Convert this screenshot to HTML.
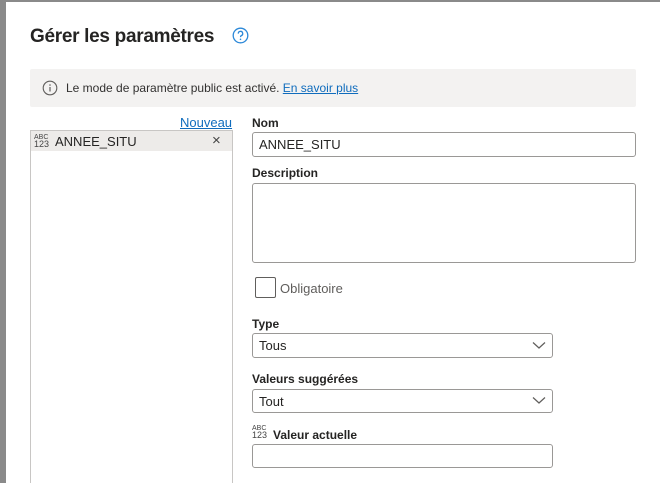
<!DOCTYPE html>
<html><head><meta charset="utf-8"><style>
*{box-sizing:border-box;margin:0;padding:0}
html,body{width:660px;height:483px;overflow:hidden}
body{background:#8a8a8a;font-family:"Liberation Sans",sans-serif;color:#252423;position:relative}
.dlg{position:absolute;left:6px;top:2px;right:0;bottom:0;background:#fff}
.a{position:absolute}
.lbl{font-size:12px;font-weight:bold;color:#252423}
.inp{border:1px solid #9a9896;border-radius:3px;background:#fff;font-size:13px;padding:0 6px;display:flex;align-items:center}
.abc{font-size:7px;line-height:7px;color:#444;letter-spacing:0}
</style></head><body>
<div class="dlg"></div>
<div class="a" style="left:30px;top:26px;font-size:19px;font-weight:bold;color:#252423;letter-spacing:-0.3px">Gérer les paramètres</div>
<svg class="a" style="left:232px;top:27px" width="17" height="17" viewBox="0 0 17 17"><circle cx="8.5" cy="8.5" r="7.3" fill="none" stroke="#2b88d8" stroke-width="1.3"/><path d="M6.3 6.6a2.2 2.2 0 1 1 3 2c-.7.3-.8.8-.8 1.5" fill="none" stroke="#2b88d8" stroke-width="1.3"/><circle cx="8.5" cy="12.3" r=".8" fill="#2b88d8"/></svg>
<div class="a" style="left:30px;top:69px;width:606px;height:38px;background:#f3f2f1;border-radius:2px"></div>
<svg class="a" style="left:42px;top:80px" width="16" height="16" viewBox="0 0 16 16"><circle cx="8" cy="8" r="6.8" fill="none" stroke="#605e5c" stroke-width="1.1"/><path d="M8 7v4.5" stroke="#605e5c" stroke-width="1.2"/><circle cx="8" cy="5" r=".8" fill="#605e5c"/></svg>
<div class="a" style="left:66px;top:81px;font-size:12px;color:#323130">Le mode de paramètre public est activé. <span style="color:#0f6cbd;text-decoration:underline">En savoir plus</span></div>
<div class="a" style="left:180px;top:115px;font-size:13px;color:#0f6cbd;text-decoration:underline">Nouveau</div>
<div class="a" style="left:30px;top:130px;width:203px;height:353px;border:1px solid #c8c6c4;border-bottom:none"></div>
<div class="a" style="left:31px;top:131px;width:201px;height:20px;background:#edebe9"></div>
<div class="a abc" style="left:34px;top:134px">ABC<br><span style="font-size:9px">123</span></div>
<div class="a" style="left:55px;top:134px;font-size:13px">ANNEE_SITU</div>
<div class="a" style="left:212px;top:134px;font-size:15px;line-height:14px;color:#444">×</div>
<div class="a lbl" style="left:252px;top:116px">Nom</div>
<div class="a inp" style="left:252px;top:132px;width:384px;height:25px">ANNEE_SITU</div>
<div class="a lbl" style="left:252px;top:166px">Description</div>
<div class="a inp" style="left:252px;top:183px;width:384px;height:80px"></div>
<div class="a" style="left:255px;top:277px;width:21px;height:21px;border:1px solid #605e5c;border-radius:2px"></div>
<div class="a" style="left:280px;top:281px;font-size:13px;color:#605e5c">Obligatoire</div>
<div class="a lbl" style="left:252px;top:317px">Type</div>
<div class="a inp" style="left:252px;top:333px;width:301px;height:25px">Tous</div>
<div class="a lbl" style="left:252px;top:372px">Valeurs suggérées</div>
<div class="a inp" style="left:252px;top:389px;width:301px;height:24px">Tout</div>
<svg class="a" style="left:532px;top:341px" width="14" height="9"><path d="M1 1.5l6 5.5 6-5.5" fill="none" stroke="#605e5c" stroke-width="1.2"/></svg>
<svg class="a" style="left:532px;top:396px" width="14" height="9"><path d="M1 1.5l6 5.5 6-5.5" fill="none" stroke="#605e5c" stroke-width="1.2"/></svg>
<div class="a abc" style="left:252px;top:425px">ABC<br><span style="font-size:9px">123</span></div>
<div class="a lbl" style="left:273px;top:428px">Valeur actuelle</div>
<div class="a inp" style="left:252px;top:444px;width:301px;height:24px"></div>
</body></html>
